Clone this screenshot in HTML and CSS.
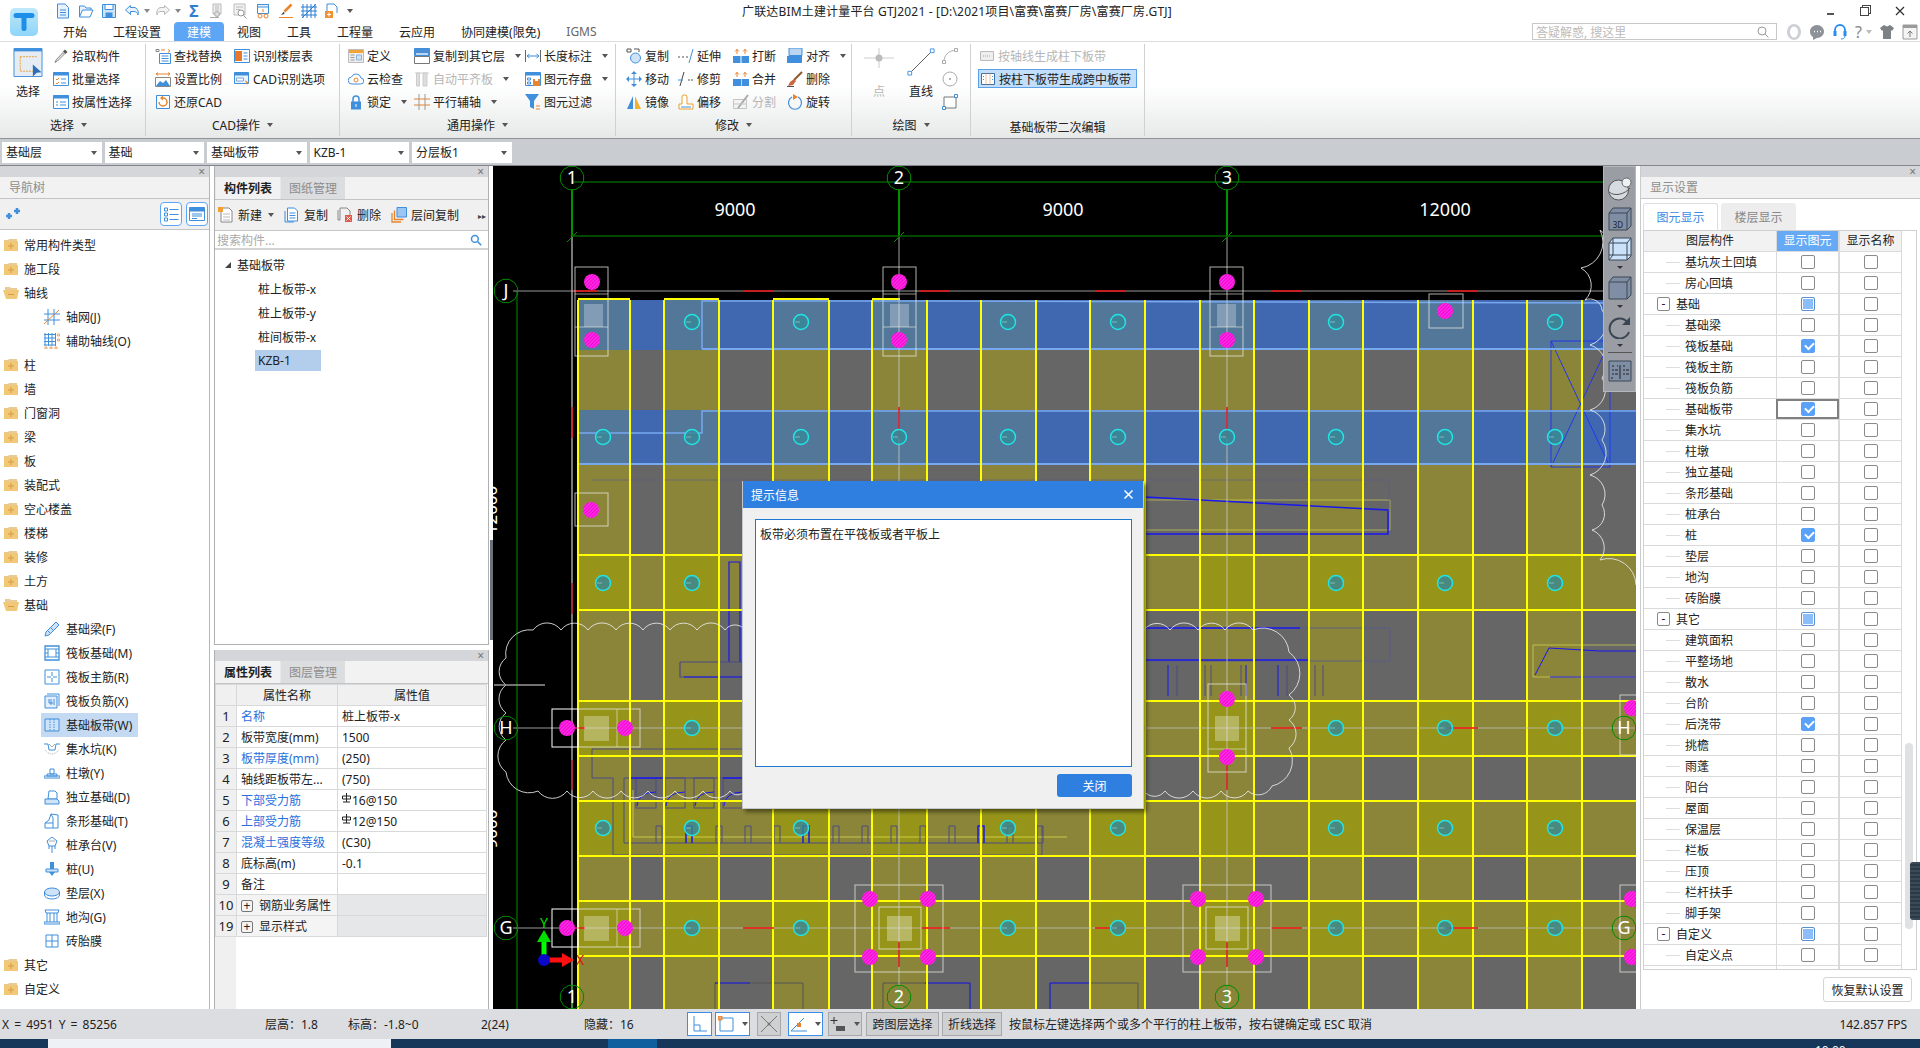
FILE: index.html
```html
<!DOCTYPE html>
<html lang="zh-CN">

<head>
    <meta charset="UTF-8">
    <title>广联达BIM土建计量平台 GTJ2021</title>
    <link rel="stylesheet" href="styles.css">
</head>

<body>
    <svg class="defs" width="0" height="0">
        <defs>
            <linearGradient id="logoFill" x1="0" y1="0" x2="0" y2="1">
                <stop offset="0" stop-color="#bfe8fb" />
                <stop offset="1" stop-color="#8fd4f8" />
            </linearGradient>
            <!-- 快速访问 -->
            <symbol id="q-doc" viewBox="0 0 16 16"><path d="M2.5 1h7.5l3.5 3.5V15h-11z" fill="#e8f2fc" stroke="#3f8fdc" /><path d="M5 7h6M5 9.500h6M5 12h6" stroke="#3f8fdc" /></symbol>
            <symbol id="q-open" viewBox="0 0 16 16"><path d="M1.500 14V3h5l1.500 2h5v2" fill="#e8f2fc" stroke="#3f8fdc" /><path d="M1.500 14l3-7h10.500l-3 7z" fill="#fff" stroke="#3f8fdc" /></symbol>
            <symbol id="q-save" viewBox="0 0 16 16"><path d="M1.500 1.500h13v13h-13z" fill="#cfe3f8" stroke="#3f8fdc" /><path d="M4 1.500h8v5h-8z" fill="#fff" stroke="#3f8fdc" /><path d="M4.500 14.500v-5h7v5" fill="#3f8fdc" /></symbol>
            <symbol id="q-undo" viewBox="0 0 16 16"><path d="M6.500 2.500l-5 4.500 5 4.500v-3h3.500c2 0 3.500 1 4 3.500 1-4-1-7.500-4-7.500h-3.500z" fill="#e8f2fc" stroke="#3f8fdc" /></symbol>
            <symbol id="q-redo" viewBox="0 0 16 16"><path d="M9.500 2.500l5 4.500-5 4.500v-3h-3.500c-2 0-3.500 1-4 3.500-1-4 1-7.500 4-7.500h3.500z" fill="#f3f3f3" stroke="#b8b8b8" /></symbol>
            <symbol id="q-chk" viewBox="0 0 16 16"><path d="M4 1h8v10h-8z" fill="#eee" stroke="#bbb" /><path d="M6 3h4M6 5h4M6 7h4" stroke="#bbb" /><path d="M1 14.500h9" stroke="#aaa" /><circle cx="8" cy="11" r="2.500" fill="#ddd" stroke="#aaa" /></symbol>
            <symbol id="q-rep" viewBox="0 0 16 16"><path d="M2 1h11v11h-11z" fill="#f2f2f2" stroke="#bbb" /><path d="M4 4h7M4 6.500h4" stroke="#bbb" /><circle cx="9" cy="10" r="3" fill="#fff" stroke="#999" /><path d="M11.500 12.500l3 3" stroke="#999" /></symbol>
            <symbol id="q-calc" viewBox="0 0 16 16"><path d="M2.500 1.500h11v9h-11z" fill="#fff" stroke="#3f8fdc" /><path d="M2.500 1.500h11v2.500h-11z" fill="#e8f2fc" stroke="#3f8fdc" /><circle cx="5" cy="13" r="2" fill="#fff" stroke="#e8842c" /><circle cx="11" cy="13" r="2" fill="#fff" stroke="#e8842c" /><path d="M8 6v3" stroke="#e8842c" /></symbol>
            <symbol id="q-brush" viewBox="0 0 16 16"><path d="M13.500 1.500l-7 7" stroke="#e8842c" stroke-width="2.500" /><path d="M6 8.500l-3 3.500 3.500-1z" fill="#444" /><path d="M1 14.500h14" stroke="#e8842c" /></symbol>
            <symbol id="q-net" viewBox="0 0 16 16"><path d="M2 1v14M6 1v14M10 1v14M14 1v14M0 4h16M0 8h16M0 12h16" stroke="#2f7fd0" /><path d="M1 15L15 1" stroke="#2f7fd0" /></symbol>
            <symbol id="q-add" viewBox="0 0 16 16"><path d="M3 1h7l3 3v6" fill="#fff" stroke="#3f8fdc" /><path d="M3 1v8" stroke="#3f8fdc" /><path d="M1 8h8v7h-8z" fill="#f09030" /><path d="M5 9.500v4M3 11.500h4" stroke="#fff" /></symbol>

            <!-- 功能区 -->
            <symbol id="r-select" viewBox="0 0 30 30"><path d="M.5 .5h29v29h-29z" fill="#e6ecf4" stroke="#3f8fdc" /><path d="M.5 .5h29v3h-29z" fill="#3f8fdc" /><path d="M7 9h17M7 9v15" stroke="#e8a030" stroke-dasharray="2 1" fill="none" /><path d="M20 17l9 8-5 .5-4 4z" fill="#2e6fb8" /><path d="M7 24h13" stroke="#e8a030" stroke-dasharray="2 1" /></symbol>
            <symbol id="r-dropper" viewBox="0 0 16 16"><path d="M12 1.500l2.500 2.500-2 2-2.500-2.500z" fill="#555" /><path d="M10 4.500l1.500 1.500-7 7-2.500 1.500 1-2.500z" fill="#dfe6ee" stroke="#8a8a8a" /></symbol>
            <symbol id="r-batch" viewBox="0 0 16 16"><path d="M.5 1.500h15v13h-15z" fill="#fff" stroke="#3f8fdc" /><path d="M.5 1.500h15v3h-15z" fill="#3f8fdc" /><path d="M3 8l1 1 2-2M3 12l1 1 2-2" stroke="#e8842c" fill="none" /><path d="M8 8h5M8 12h5" stroke="#3f8fdc" /></symbol>
            <symbol id="r-attr" viewBox="0 0 16 16"><path d="M.5 1.500h15v13h-15z" fill="#fff" stroke="#3f8fdc" /><path d="M.5 1.500h15v3h-15z" fill="#3f8fdc" /><path d="M3 8h2M3 11h2M7 8h6M7 11h6" stroke="#3f8fdc" /></symbol>
            <symbol id="r-find" viewBox="0 0 16 16"><path d="M4.500 5.500h11v10h-11z" fill="#fff" stroke="#3f8fdc" /><path d="M6.500 8h7M6.500 10.500h7M6.500 13h7" stroke="#3f8fdc" /><path d="M1 1.500h3v2h-3z" fill="none" stroke="#888" /><path d="M6 2h4" stroke="#e8842c" /><path d="M13 1.500l2 1.500-2 1.500" stroke="#e8842c" fill="none" /></symbol>
            <symbol id="r-scale" viewBox="0 0 16 16"><path d="M.5 6.500h15v9h-15z" fill="#fff" stroke="#888" /><path d="M1 15l4-5 3 2 3-3 4 6z" fill="#3f8fdc" /><path d="M1 3h14M1 3l2-1.500M1 3l2 1.500M15 3l-2-1.500M15 3l-2 1.500" stroke="#e8842c" fill="none" /></symbol>
            <symbol id="r-restore" viewBox="0 0 16 16"><path d="M1.500 1.500h13v13h-13z" fill="#fff" stroke="#3f8fdc" /><path d="M4 8a4 4 0 1 0 4-4" fill="none" stroke="#e8842c" stroke-width="1.500" /><path d="M8 1.500v5l-3-2.500z" fill="#e8842c" /></symbol>
            <symbol id="r-floor" viewBox="0 0 16 16"><path d="M.5 1.500h15v13h-15z" fill="#fff" stroke="#3f8fdc" /><path d="M1 3h7v10h-7z" fill="#e8762c" /><path d="M9.500 5h4M9.500 8h4M9.500 11h4" stroke="#3f8fdc" /></symbol>
            <symbol id="r-cadopt" viewBox="0 0 16 16"><path d="M.5 1.500h14v11h-14z" fill="#eaf2fb" stroke="#3f8fdc" /><path d="M.5 1.500h14v3h-14z" fill="#3f8fdc" /><path d="M11 9l4 3-2 .5.5 2.500z" fill="#e8842c" /><path d="M2.500 7h7v3h-7z" fill="#fff" stroke="#7aa7dd" /></symbol>
            <symbol id="r-define" viewBox="0 0 16 16"><path d="M.5 1.500h15v13h-15z" fill="#eee" stroke="#bbb" /><path d="M1 2h14v3h-14z" fill="#f2a33a" /><path d="M2.500 7h4M2.500 9.500h4M2.500 12h4" stroke="#999" /><path d="M8.500 7h5v5h-5z" fill="#cfe0f3" stroke="#8fb3dd" /></symbol>
            <symbol id="r-cloud" viewBox="0 0 16 16"><path d="M4 13a3.500 3.500 0 0 1-.5-7 5 5 0 0 1 9.500 1 3 3 0 0 1-.5 6z" fill="#fff" stroke="#3f8fdc" /><circle cx="8" cy="9" r="2" fill="none" stroke="#e8842c" /></symbol>
            <symbol id="r-lock" viewBox="0 0 16 16"><path d="M5 8V5a3 3 0 0 1 6 0v3" fill="none" stroke="#3f8fdc" stroke-width="1.500" /><path d="M3 7.500h10v8h-10z" fill="#3f8fdc" /><path d="M8 10v3" stroke="#fff" /></symbol>
            <symbol id="r-copylayer" viewBox="0 0 16 16"><path d="M.5 .5h15v7h-15z" fill="#4a8fd6" stroke="#3f8fdc" /><path d="M.5 8.500h15v7h-15z" fill="#fff" stroke="#777" /><path d="M2 5h12v2h-12z" fill="#bcd6f2" /></symbol>
            <symbol id="r-autoalign" viewBox="0 0 16 16"><path d="M1 2h14" stroke="#ccc" /><path d="M2.500 2h3v13h-3zM9 2h4v13h-4z" fill="#ddd" stroke="#ccc" /></symbol>
            <symbol id="r-parallel" viewBox="0 0 16 16"><path d="M0 5h16M0 11h16" stroke="#e8842c" /><path d="M5 0v16M11 0v16" stroke="#999" /></symbol>
            <symbol id="r-length" viewBox="0 0 16 16"><path d="M.5 2v12M15.500 2v12" stroke="#666" /><path d="M2 8h12M2 8l2.500-2M2 8l2.500 2M14 8l-2.500-2M14 8l-2.500 2" stroke="#3f8fdc" fill="none" /></symbol>
            <symbol id="r-saveel" viewBox="0 0 16 16"><path d="M.5 1.500h15v13h-15z" fill="#fff" stroke="#3f8fdc" /><path d="M.5 1.500h15v3h-15z" fill="#3f8fdc" /><path d="M8 8h7v7h-7z" fill="#e8842c" /><path d="M10 8h3v2h-3z" fill="#fff" /><path d="M2.500 7h3v2h-3zM2.500 11h3v2h-3z" fill="none" stroke="#3f8fdc" /></symbol>
            <symbol id="r-filter" viewBox="0 0 16 16"><path d="M0 0h14l-5 7v8l-4-2v-6z" fill="#3f8fdc" /><path d="M11 12h4M11 15h4" stroke="#e8842c" /></symbol>
            <symbol id="r-copy" viewBox="0 0 16 16"><circle cx="9.500" cy="10" r="5" fill="#cfe3f8" stroke="#3f8fdc" /><path d="M1 1h4v3h-4zM8 1h5M13 1v3" fill="none" stroke="#555" /></symbol>
            <symbol id="r-move" viewBox="0 0 16 16"><path d="M8 2v12M2 8h12" stroke="#3f8fdc" /><path d="M8 0l3 3h-6zM8 16l3-3h-6zM0 8l3-3v6zM16 8l-3-3v6z" fill="#3f8fdc" /></symbol>
            <symbol id="r-mirror" viewBox="0 0 16 16"><path d="M7 2v13h-6z" fill="#3f8fdc" /><path d="M9 2v13h6z" fill="#f2b030" /></symbol>
            <symbol id="r-extend" viewBox="0 0 16 16"><path d="M0 9h2M4 9h2M8 9h2" stroke="#555" /><path d="M11 15L15 1" stroke="#3f8fdc" /></symbol>
            <symbol id="r-trim" viewBox="0 0 16 16"><path d="M10 9h2M13 9h2" stroke="#555" /><path d="M2 15L6 1" stroke="#444" /><path d="M0 9h5" stroke="#3f8fdc" /></symbol>
            <symbol id="r-offset" viewBox="0 0 16 16"><path d="M1 15v-5h3V3a2 2 0 0 1 2-2h1a2 2 0 0 1 2 2v7h6v5z" fill="#fff" stroke="#e8a030" /><path d="M3 13h10" stroke="#3f8fdc" /></symbol>
            <symbol id="r-break" viewBox="0 0 16 16"><path d="M0 8h7.500v7h-7.500zM8.500 8h7.500v7h-7.500z" fill="#3f8fdc" /><path d="M4 1v5M2 3.500l2-2 2 2M12 1v5M10 3.500l2-2 2 2" fill="none" stroke="#e8842c" /></symbol>
            <symbol id="r-merge" viewBox="0 0 16 16"><path d="M0 8h16v7h-16z" fill="#3f8fdc" /><path d="M8 8h1v7h-1z" fill="#bcd6f2" /><path d="M4 1v5M2 3.500l2-2 2 2M12 1v5M10 3.500l2-2 2 2" fill="none" stroke="#e8842c" /></symbol>
            <symbol id="r-split" viewBox="0 0 16 16"><path d="M.5 5.500h13v9h-13z" fill="#f4f4f4" stroke="#c4c4c4" /><path d="M5 14L15 1" stroke="#aaa" stroke-width="2" /><path d="M0 10h14" stroke="#c4c4c4" /></symbol>
            <symbol id="r-align" viewBox="0 0 16 16"><path d="M2 0h13v7.500h-13z" fill="#bcd6f2" stroke="#3f8fdc" /><path d="M0 8h15v7h-15z" fill="#3f8fdc" /></symbol>
            <symbol id="r-delete" viewBox="0 0 16 16"><path d="M15 1L7 9" stroke="#8a5a2a" stroke-width="2" /><path d="M7 8l2 2-3 4-5 1 2-4z" fill="#c8683c" /><path d="M0 15.500h7" stroke="#555" /></symbol>
            <symbol id="r-rotate" viewBox="0 0 16 16"><path d="M5 3a6.500 6.500 0 1 0 6 0" fill="none" stroke="#3f8fdc" stroke-width="1.200" /><path d="M6 0l5 3-5 3z" fill="#e8842c" /></symbol>
            <symbol id="r-point" viewBox="0 0 30 28"><path d="M15 0v20M0 10h30" stroke="#ccc" /><circle cx="15" cy="10" r="3.500" fill="#bbb" /></symbol>
            <symbol id="r-line" viewBox="0 0 30 30"><path d="M3 27L27 3" stroke="#555" /><path d="M1 25h4v4h-4zM25 1h4v4h-4z" fill="#fff" stroke="#3f8fdc" /></symbol>
            <symbol id="r-arc" viewBox="0 0 16 16"><path d="M2 14C2 7 6 3 14 2" fill="none" stroke="#aaa" /><path d="M.5 12.500h3v3h-3zM12.500 .5h3v3h-3z" fill="#fff" stroke="#aaa" /></symbol>
            <symbol id="r-circle" viewBox="0 0 16 16"><circle cx="8" cy="8" r="7" fill="#fff" stroke="#aaa" /><circle cx="8" cy="8" r="1" fill="#999" /></symbol>
            <symbol id="r-rect" viewBox="0 0 16 16"><path d="M2 3h12v11h-12z" fill="#fff" stroke="#777" /><path d="M.5 12.500h3v3h-3zM12.500 .5h3v3h-3z" fill="#fff" stroke="#3f8fdc" /></symbol>
            <symbol id="r-strip1" viewBox="0 0 16 16"><path d="M1.500 3.500h13v9h-13z" fill="#eee" stroke="#bbb" /><path d="M4 8h8" stroke="#aaa" stroke-dasharray="1 1" /></symbol>
            <symbol id="r-strip2" viewBox="0 0 16 16"><path d="M1.500 2.500h13v11h-13z" fill="#fff" stroke="#3f6fa8" /><path d="M6 2.500v11M10 2.500v11" stroke="#e8842c" stroke-dasharray="1 1" /><path d="M3.500 5v1M3.500 8v1M12.500 5v1M12.500 8v1" stroke="#3f8fdc" /></symbol>

            <!-- 导航树 -->
            <symbol id="n-pin" viewBox="0 0 16 16"><path d="M1 10h6M4 7v6M9 5h6M12 2v6" stroke="#3f8fdc" stroke-width="2.500" /></symbol>
            <symbol id="n-list" viewBox="0 0 16 16"><path d="M1.500 2h3v3h-3zM1.500 7h3v3h-3zM1.500 12h3v3h-3z" fill="none" stroke="#3f8fdc" /><path d="M6.500 3.500h9M6.500 8.500h9M6.500 13.500h9" stroke="#3f8fdc" /></symbol>
            <symbol id="n-form" viewBox="0 0 16 16"><path d="M.5 1.500h15v13h-15z" fill="#fff" stroke="#3f8fdc" /><path d="M.5 1.500h15v4h-15z" fill="#3f8fdc" /><path d="M3 8h10M3 10h10M3 12.500h5" stroke="#3f8fdc" /></symbol>
            <symbol id="n-fold" viewBox="0 0 16 16"><path d="M1 3h4l1-1h8v3h-13z" fill="#e8cb96" /><path d="M1 4h14v10h-14z" fill="#f0c878" /><path d="M8 6v6M5 9h6" stroke="#d99a3a" /></symbol>
            <symbol id="n-foldo" viewBox="0 0 16 16"><path d="M2 2h5l1 1h6v3h-12z" fill="#e8cb96" /><path d="M0 5h16l-2 9h-11z" fill="#f0c878" /><path d="M5 9.500h6" stroke="#d99a3a" /></symbol>
            <symbol id="n-axis" viewBox="0 0 16 16"><path d="M4 0v16M10 0v16M0 5h16M0 11h16" stroke="#3f8fdc" /><path d="M0 15L15 1" stroke="#e8842c" /></symbol>
            <symbol id="n-aux" viewBox="0 0 16 16"><path d="M1 0v13M4.500 0v13M8 0v13M11.500 0v13M0 1.500h12M0 5h12M0 8.500h12M0 12h12" stroke="#3f8fdc" /><path d="M13.500 1h2v2h-2zM13.500 6h2v2h-2zM1 14h2v2h-2zM6 14h2v2h-2zM11 14h2v2h-2z" fill="none" stroke="#e8842c" stroke-width=".7" /></symbol>
            <symbol id="n-pen" viewBox="0 0 16 16"><path d="M12 1l3 3-10 10-4 1 1-4z" fill="#cfe3f8" stroke="#3f8fdc" /><path d="M4 10l3 3M7 7l3 3" stroke="#3f8fdc" /></symbol>
            <symbol id="n-raft" viewBox="0 0 16 16"><path d="M1 1h14v14h-14z" fill="none" stroke="#3f8fdc" stroke-width="1.300" /><path d="M4 4h8v8h-8z" fill="none" stroke="#3f8fdc" /><path d="M1 4h3M1 8h3M1 12h3M12 4h3M12 8h3M12 12h3" stroke="#3f8fdc" /></symbol>
            <symbol id="n-rmain" viewBox="0 0 16 16"><path d="M1 1h14v14h-14z" fill="#fff" stroke="#3f8fdc" /><path d="M8 3v4M8 9v4M3 8h4M9 8h4" stroke="#3f8fdc" /></symbol>
            <symbol id="n-rneg" viewBox="0 0 16 16"><path d="M1 3h12v12h-12z" fill="#e3eefa" stroke="#3f8fdc" /><path d="M3 1h12v12" fill="none" stroke="#3f8fdc" /><path d="M5 6v4h4M7 6v6M10 6v6" fill="none" stroke="#3f8fdc" /></symbol>
            <symbol id="n-strip" viewBox="0 0 16 16"><path d="M1 2h14v12h-14z" fill="#cfe3f8" stroke="#3f8fdc" /><path d="M6 2v12M10 2v12" stroke="#3f8fdc" stroke-dasharray="1.500 1" /></symbol>
            <symbol id="n-pit" viewBox="0 0 16 16"><path d="M0 3h4l1 6h6l1-6h4" fill="none" stroke="#3f8fdc" /><path d="M1 9q7 8 14 0" fill="none" stroke="#aaa" stroke-dasharray="1 1" /><path d="M5 3l3 3 3-3" fill="none" stroke="#aaa" /></symbol>
            <symbol id="n-pier" viewBox="0 0 16 16"><path d="M6 4h4v5h-4zM3 9h10v2h-10zM0 11h16v2h-16z" fill="#fff" stroke="#3f8fdc" /></symbol>
            <symbol id="n-iso" viewBox="0 0 16 16"><path d="M5 2h6l2 2v6h-9z" fill="#fff" stroke="#3f8fdc" /><path d="M1 10h12l2 2v3h-14z" fill="#cfe3f8" stroke="#3f8fdc" /></symbol>
            <symbol id="n-stripf" viewBox="0 0 16 16"><path d="M1 15v-5l4-3 2-6 7 1v13z" fill="#fff" stroke="#3f8fdc" /><path d="M7 1l2 4v10M1 10h8" fill="none" stroke="#3f8fdc" /></symbol>
            <symbol id="n-cap" viewBox="0 0 16 16"><path d="M8 0l5 4-2 5h-6l-2-5z" fill="#fff" stroke="#3f8fdc" /><path d="M5 9v3M8 9v7M11 9v3" stroke="#3f8fdc" /><path d="M5 4h6" stroke="#aaa" /></symbol>
            <symbol id="n-pile" viewBox="0 0 16 16"><path d="M6 1h4v8h-4z" fill="#3f8fdc" /><path d="M2 8h12v3h-12z" fill="#cfe3f8" stroke="#3f8fdc" /><path d="M5 11h6l-3 4z" fill="#3f8fdc" /></symbol>
            <symbol id="n-pad" viewBox="0 0 16 16"><path d="M.5 7a7.500 4 0 1 0 15 0a7.500 4 0 1 0-15 0z" fill="#cfe3f8" stroke="#3f8fdc" /><path d="M.5 7v3a7.500 4 0 0 0 15 0V7" fill="none" stroke="#3f8fdc" /></symbol>
            <symbol id="n-ditch" viewBox="0 0 16 16"><path d="M1 1h14l-1 3h-12z" fill="#fff" stroke="#3f8fdc" /><path d="M3 4v9M6 4v9M10 4v9M13 4v9M0 13h16v2h-16z" fill="none" stroke="#3f8fdc" /></symbol>
            <symbol id="n-brick" viewBox="0 0 16 16"><path d="M2 2h12v12h-12zM8 2v12M2 8h12" fill="#fff" stroke="#3f8fdc" /></symbol>

            <!-- 构件列表 -->
            <symbol id="m-new" viewBox="0 0 16 16"><path d="M3 1h8l3 3v11h-11z" fill="#fff" stroke="#888" /><path d="M5 7h7M5 10h7M5 13h7" stroke="#bbb" /><path d="M0 0h5v5h-5z" fill="#f0a030" /></symbol>
            <symbol id="m-dup" viewBox="0 0 16 16"><path d="M1 4v11h9" fill="none" stroke="#3f8fdc" /><path d="M3.500 1h7l3 3v10h-10z" fill="#fff" stroke="#3f8fdc" /><path d="M5.500 6h6M5.500 8.500h6M5.500 11h6" stroke="#3f8fdc" /></symbol>
            <symbol id="m-del" viewBox="0 0 16 16"><path d="M1 3v10h2M3 1h7l3 3v5" fill="none" stroke="#888" /><path d="M3 1v12" stroke="#888" /><path d="M8 8h7v7h-7z" fill="#e0584a" /><path d="M9.500 9.500l4 4M13.500 9.500l-4 4" stroke="#fff" /></symbol>
            <symbol id="m-lcopy" viewBox="0 0 16 16"><path d="M1 6v9h9" fill="none" stroke="#e8842c" stroke-width="1.300" /><path d="M3.500 3.500v9h9" fill="none" stroke="#e8842c" stroke-width="1.300" /><path d="M6 .5h9.500v9.500h-9.500z" fill="#9cc6f2" stroke="#3f8fdc" /></symbol>
            <symbol id="m-search" viewBox="0 0 16 16"><circle cx="6.500" cy="6.500" r="4.500" fill="#fff" stroke="#3f8fdc" stroke-width="2" /><path d="M10 10l5 5" stroke="#3f8fdc" stroke-width="2" /></symbol>

            <!-- 状态栏 -->
            <symbol id="s-ortho" viewBox="0 0 16 16"><path d="M2 0v15h13" fill="none" stroke="#3f8fdc" /><path d="M2 9h6v6" fill="none" stroke="#3f8fdc" /></symbol>
            <symbol id="s-snap" viewBox="0 0 16 16"><path d="M2 2h13v13h-13z" fill="#fff" stroke="#3f8fdc" /><path d="M0 0h4v4h-4z" fill="#f0a060" stroke="#e8842c" /></symbol>
            <symbol id="s-cross" viewBox="0 0 16 16"><path d="M0 0l16 16M16 0L0 16" stroke="#777" /><circle cx="8" cy="8" r="1.500" fill="#777" /></symbol>
            <symbol id="s-angle" viewBox="0 0 16 16"><path d="M0 15L13 2" stroke="#3f8fdc" /><path d="M0 15h16" stroke="#3f8fdc" /><path d="M6 7h4v4h-4z" fill="#e8842c" /></symbol>
            <symbol id="s-plus" viewBox="0 0 16 16"><path d="M4 1v7M.5 4.500h7" stroke="#333" /><path d="M6 10h9v5h-9z" fill="#555" /></symbol>

            <!-- 视图工具条 -->
            <symbol id="v-sphere" viewBox="0 0 24 24"><circle cx="10.500" cy="13" r="10" fill="#d6dbe1" stroke="#555" /><path d="M1 15c6 5 16 2 21-4" fill="none" stroke="#555" /><circle cx="18.500" cy="5.500" r="4.500" fill="#eef1f4" stroke="#666" /></symbol>
            <symbol id="v-cube" viewBox="0 0 24 24"><path d="M1 6l4-5h18v18l-4 4H1z" fill="#7f8ea4" stroke="#3b4655" /><path d="M1 6h18v17M19 6l4-5" fill="none" stroke="#3b4655" /></symbol>
            <symbol id="v-cube3d" viewBox="0 0 24 24"><path d="M1 6l4-5h18v18l-4 4H1z" fill="#7f8ea4" stroke="#3b4655" /><path d="M1 6h18v17M19 6l4-5" fill="none" stroke="#3b4655" /><text x="10" y="21" font-size="8" text-anchor="middle" fill="#222" font-family="Noto Sans, sans-serif">3D</text></symbol>
            <symbol id="v-cubeb" viewBox="0 0 24 24"><path d="M1 6l4-5h18v18l-4 4H1z" fill="#cbe2fb" stroke="#3b4655" /><path d="M1 6h18v17M19 6l4-5M5 1v17H1M5 18h18" fill="none" stroke="#3b4655" /><path d="M1 23l4-5" stroke="#3b4655" /></symbol>
            <symbol id="v-rot" viewBox="0 0 24 24"><path d="M20 8a10 10 0 1 0 1 9" fill="none" stroke="#3b4655" stroke-width="2" /><path d="M22 2v8h-8z" fill="#3b4655" /></symbol>
            <symbol id="v-list" viewBox="0 0 24 24"><path d="M1 3h22v20H1z" fill="#7f8ea4" stroke="#3b4655" /><path d="M12 7v14M4 8h2M9 8h1M4 12h2M7 12h3M4 16h2M7 16h3M15 8h2M15 12h2M18 12h3M15 16h2M18 16h3M3 20h2" stroke="#222" /></symbol>

            <!-- 右上角 -->
            <symbol id="t-user" viewBox="0 0 16 16"><path d="M8 0a7 8 0 0 0-7 8c0 4 3 8 7 8s7-4 7-8a7 8 0 0 0-7-8z" fill="#cdd0d4" /><ellipse cx="8" cy="8" rx="4" ry="5.500" fill="#fff" /></symbol>
            <symbol id="t-chat" viewBox="0 0 16 16"><path d="M8 1c4 0 7 3 7 6.500s-3 6.500-7 6.500L4 16v-3C2 12 1 10 1 7.500 1 4 4 1 8 1z" fill="#8d9298" /><path d="M5 7.500h1M8 7.500h1M11 7.500h1" stroke="#fff" stroke-width="1.500" /></symbol>
            <symbol id="t-head" viewBox="0 0 16 16"><path d="M3 9V6a5 5 0 0 1 10 0v3" fill="none" stroke="#2a8cf0" stroke-width="1.800" /><path d="M1.500 7h3v5h-3zM11.500 7h3v5h-3z" fill="#2a8cf0" /><path d="M13 12c0 2-2 3-4 3" fill="none" stroke="#2a8cf0" /></symbol>
            <symbol id="t-shirt" viewBox="0 0 16 16"><path d="M5 1l3 1.500L11 1l4 3-2 3-1-1v9H4V6L3 7 1 4z" fill="#7c8186" /></symbol>
            <symbol id="t-box" viewBox="0 0 16 16"><path d="M1 1h14v14h-14z" fill="#f4f4f4" stroke="#9a9a9a" /><path d="M1 1h14v3h-14z" fill="#9a9a9a" /><path d="M8 13V7M5.500 9.500L8 7l2.500 2.500" fill="none" stroke="#777" /></symbol>
        </defs>
    </svg>

    <header class="topbar">
        <div class="logo">
            <svg width="28" height="28" viewBox="0 0 28 28"><rect width="28" height="28" rx="5" fill="url(#logoFill)" /><path d="M6 7.500h16M14 7.500v13" stroke="#1e8fe8" stroke-width="5" stroke-linecap="round" fill="none" /></svg>
        </div>
        <div class="topbar-rows">
            <div class="titlerow">
                <div class="qat">
                    <svg class="ic"><use href="#q-doc" /></svg>
                    <svg class="ic"><use href="#q-open" /></svg>
                    <svg class="ic"><use href="#q-save" /></svg>
                    <svg class="ic"><use href="#q-undo" /></svg><span class="caret qat-caret"></span>
                    <svg class="ic"><use href="#q-redo" /></svg><span class="caret qat-caret"></span>
                    <span class="sigma">Σ</span>
                    <svg class="ic"><use href="#q-chk" /></svg>
                    <svg class="ic"><use href="#q-rep" /></svg>
                    <svg class="ic"><use href="#q-calc" /></svg>
                    <svg class="ic"><use href="#q-brush" /></svg>
                    <svg class="ic"><use href="#q-net" /></svg>
                    <svg class="ic"><use href="#q-add" /></svg>
                    <span class="caret qat-more"></span>
                </div>
                <div class="apptitle">广联达BIM土建计量平台 GTJ2021 - [D:\2021项目\富赛\富赛厂房\富赛厂房.GTJ]</div>
                <div class="winbtns">
                    <span class="win-min"></span>
                    <span class="win-max"></span>
                    <svg class="win-close" viewBox="0 0 10 10"><path d="M1 1l8 8M9 1l-8 8" stroke="#333" stroke-width="1.300" /></svg>
                </div>
            </div>
            <div class="tabrow">
                <nav class="tabs">
                    <span class="tab">开始</span>
                    <span class="tab">工程设置</span>
                    <span class="tab tab-on">建模</span>
                    <span class="tab">视图</span>
                    <span class="tab">工具</span>
                    <span class="tab">工程量</span>
                    <span class="tab">云应用</span>
                    <span class="tab">协同建模(限免)</span>
                    <span class="tab tab-gray">IGMS</span>
                </nav>
                <div class="helpbar">
                    <div class="helpsearch"><span>答疑解惑, 搜这里</span>
                        <svg width="12" height="12" viewBox="0 0 12 12"><circle cx="5" cy="5" r="4" fill="none" stroke="#999" /><path d="M8 8l3.500 3.500" stroke="#999" /></svg>
                    </div>
                    <svg class="ic"><use href="#t-user" /></svg>
                    <svg class="ic"><use href="#t-chat" /></svg>
                    <svg class="ic"><use href="#t-head" /></svg>
                    <span class="help-q">?</span><span class="caret help-caret"></span>
                    <svg class="ic"><use href="#t-shirt" /></svg>
                    <svg class="ic"><use href="#t-box" /></svg>
                </div>
            </div>
        </div>
    </header>

    <section class="ribbon">
        <div class="group g-select">
            <div class="group-body">
                <div class="bigbtn big-select"><svg width="30" height="29"><use href="#r-select" /></svg><span>选择</span></div>
                <div class="col">
                    <div class="rb"><svg class="ic"><use href="#r-dropper" /></svg>拾取构件</div>
                    <div class="rb"><svg class="ic"><use href="#r-batch" /></svg>批量选择</div>
                    <div class="rb"><svg class="ic"><use href="#r-attr" /></svg>按属性选择</div>
                </div>
            </div>
            <div class="group-label">选择<span class="caret"></span></div>
        </div>
        <div class="group g-cad">
            <div class="group-body">
                <div class="col c79">
                    <div class="rb"><svg class="ic"><use href="#r-find" /></svg>查找替换</div>
                    <div class="rb"><svg class="ic"><use href="#r-scale" /></svg>设置比例</div>
                    <div class="rb"><svg class="ic"><use href="#r-restore" /></svg>还原CAD</div>
                </div>
                <div class="col">
                    <div class="rb"><svg class="ic"><use href="#r-floor" /></svg>识别楼层表</div>
                    <div class="rb"><svg class="ic"><use href="#r-cadopt" /></svg>CAD识别选项</div>
                </div>
            </div>
            <div class="group-label">CAD操作<span class="caret"></span></div>
        </div>
        <div class="group g-common">
            <div class="group-body">
                <div class="col c66">
                    <div class="rb"><svg class="ic"><use href="#r-define" /></svg>定义</div>
                    <div class="rb"><svg class="ic"><use href="#r-cloud" /></svg>云检查</div>
                    <div class="rb"><svg class="ic"><use href="#r-lock" /></svg>锁定<span class="caret"></span></div>
                </div>
                <div class="col c111">
                    <div class="rb"><svg class="ic"><use href="#r-copylayer" /></svg>复制到其它层<span class="caret"></span></div>
                    <div class="rb off"><svg class="ic"><use href="#r-autoalign" /></svg>自动平齐板<span class="caret"></span></div>
                    <div class="rb"><svg class="ic"><use href="#r-parallel" /></svg>平行辅轴<span class="caret"></span></div>
                </div>
                <div class="col">
                    <div class="rb"><svg class="ic"><use href="#r-length" /></svg>长度标注<span class="caret"></span></div>
                    <div class="rb"><svg class="ic"><use href="#r-saveel" /></svg>图元存盘<span class="caret"></span></div>
                    <div class="rb"><svg class="ic"><use href="#r-filter" /></svg>图元过滤</div>
                </div>
            </div>
            <div class="group-label">通用操作<span class="caret"></span></div>
        </div>
        <div class="group g-modify">
            <div class="group-body">
                <div class="col c52">
                    <div class="rb"><svg class="ic"><use href="#r-copy" /></svg>复制</div>
                    <div class="rb"><svg class="ic"><use href="#r-move" /></svg>移动</div>
                    <div class="rb"><svg class="ic"><use href="#r-mirror" /></svg>镜像</div>
                </div>
                <div class="col c55">
                    <div class="rb"><svg class="ic"><use href="#r-extend" /></svg>延伸</div>
                    <div class="rb"><svg class="ic"><use href="#r-trim" /></svg>修剪</div>
                    <div class="rb"><svg class="ic"><use href="#r-offset" /></svg>偏移</div>
                </div>
                <div class="col c54">
                    <div class="rb"><svg class="ic"><use href="#r-break" /></svg>打断</div>
                    <div class="rb"><svg class="ic"><use href="#r-merge" /></svg>合并</div>
                    <div class="rb off"><svg class="ic"><use href="#r-split" /></svg>分割</div>
                </div>
                <div class="col">
                    <div class="rb"><svg class="ic"><use href="#r-align" /></svg>对齐<span class="caret"></span></div>
                    <div class="rb"><svg class="ic"><use href="#r-delete" /></svg>删除</div>
                    <div class="rb"><svg class="ic"><use href="#r-rotate" /></svg>旋转</div>
                </div>
            </div>
            <div class="group-label">修改<span class="caret"></span></div>
        </div>
        <div class="group g-draw">
            <div class="group-body">
                <div class="bigbtn big-draw off"><svg width="30" height="28"><use href="#r-point" /></svg><span>点</span></div>
                <div class="bigbtn big-draw"><svg width="30" height="28"><use href="#r-line" /></svg><span>直线</span></div>
                <div class="col">
                    <div class="rb"><svg class="ic"><use href="#r-arc" /></svg></div>
                    <div class="rb"><svg class="ic"><use href="#r-circle" /></svg></div>
                    <div class="rb"><svg class="ic"><use href="#r-rect" /></svg></div>
                </div>
            </div>
            <div class="group-label">绘图<span class="caret"></span></div>
        </div>
        <div class="group g-strip">
            <div class="group-body">
                <div class="col">
                    <div class="rb off"><svg class="ic"><use href="#r-strip1" /></svg>按轴线生成柱下板带</div>
                    <div class="rb rb-on"><svg class="ic"><use href="#r-strip2" /></svg>按柱下板带生成跨中板带</div>
                </div>
            </div>
            <div class="group-label">基础板带二次编辑</div>
        </div>
    </section>

    <div class="selectbar">
        <div class="combo">基础层</div>
        <div class="combo">基础</div>
        <div class="combo">基础板带</div>
        <div class="combo">KZB-1</div>
        <div class="combo">分层板1</div>
    </div>

    <main class="workspace">
        <aside class="panel navpanel">
            <div class="strip"><span class="strip-x">×</span></div>
            <div class="panel-title">导航树</div>
            <div class="navtools">
                <svg class="ic"><use href="#n-pin" /></svg>
                <span class="navbtn nb-first"><svg class="ic"><use href="#n-list" /></svg></span>
                <span class="navbtn"><svg class="ic"><use href="#n-form" /></svg></span>
            </div>
            <ul class="tree">
                <li><svg class="ic"><use href="#n-fold" /></svg>常用构件类型</li>
                <li><svg class="ic"><use href="#n-fold" /></svg>施工段</li>
                <li><svg class="ic"><use href="#n-foldo" /></svg>轴线</li>
                <li class="sub"><svg class="ic"><use href="#n-axis" /></svg>轴网(J)</li>
                <li class="sub"><svg class="ic"><use href="#n-aux" /></svg>辅助轴线(O)</li>
                <li><svg class="ic"><use href="#n-fold" /></svg>柱</li>
                <li><svg class="ic"><use href="#n-fold" /></svg>墙</li>
                <li><svg class="ic"><use href="#n-fold" /></svg>门窗洞</li>
                <li><svg class="ic"><use href="#n-fold" /></svg>梁</li>
                <li><svg class="ic"><use href="#n-fold" /></svg>板</li>
                <li><svg class="ic"><use href="#n-fold" /></svg>装配式</li>
                <li><svg class="ic"><use href="#n-fold" /></svg>空心楼盖</li>
                <li><svg class="ic"><use href="#n-fold" /></svg>楼梯</li>
                <li><svg class="ic"><use href="#n-fold" /></svg>装修</li>
                <li><svg class="ic"><use href="#n-fold" /></svg>土方</li>
                <li><svg class="ic"><use href="#n-foldo" /></svg>基础</li>
                <li class="sub"><svg class="ic"><use href="#n-pen" /></svg>基础梁(F)</li>
                <li class="sub"><svg class="ic"><use href="#n-raft" /></svg>筏板基础(M)</li>
                <li class="sub"><svg class="ic"><use href="#n-rmain" /></svg>筏板主筋(R)</li>
                <li class="sub"><svg class="ic"><use href="#n-rneg" /></svg>筏板负筋(X)</li>
                <li class="sub sub-on"><svg class="ic"><use href="#n-strip" /></svg>基础板带(W)</li>
                <li class="sub"><svg class="ic"><use href="#n-pit" /></svg>集水坑(K)</li>
                <li class="sub"><svg class="ic"><use href="#n-pier" /></svg>柱墩(Y)</li>
                <li class="sub"><svg class="ic"><use href="#n-iso" /></svg>独立基础(D)</li>
                <li class="sub"><svg class="ic"><use href="#n-stripf" /></svg>条形基础(T)</li>
                <li class="sub"><svg class="ic"><use href="#n-cap" /></svg>桩承台(V)</li>
                <li class="sub"><svg class="ic"><use href="#n-pile" /></svg>桩(U)</li>
                <li class="sub"><svg class="ic"><use href="#n-pad" /></svg>垫层(X)</li>
                <li class="sub"><svg class="ic"><use href="#n-ditch" /></svg>地沟(G)</li>
                <li class="sub"><svg class="ic"><use href="#n-brick" /></svg>砖胎膜</li>
                <li><svg class="ic"><use href="#n-fold" /></svg>其它</li>
                <li><svg class="ic"><use href="#n-fold" /></svg>自定义</li>
            </ul>
        </aside>

        <div class="midcol">
            <section class="panel listpanel">
                <div class="strip"><span class="strip-x">×</span></div>
                <div class="ptabs"><span class="ptab ptab-on">构件列表</span><span class="ptab">图纸管理</span></div>
                <div class="listtools">
                    <span class="lt lt-new"><svg class="ic"><use href="#m-new" /></svg>新建<span class="caret"></span></span>
                    <span class="lt lt-dup"><svg class="ic"><use href="#m-dup" /></svg>复制</span>
                    <span class="lt lt-del"><svg class="ic"><use href="#m-del" /></svg>删除</span>
                    <span class="lt lt-copy"><svg class="ic"><use href="#m-lcopy" /></svg>层间复制</span>
                    <span class="lt-more">▸▸</span>
                </div>
                <div class="listsearch"><span>搜索构件...</span><svg width="12" height="12"><use href="#m-search" /></svg></div>
                <div class="elemtree">
                    <div class="et-root"><span class="et-arrow"></span>基础板带</div>
                    <div class="et-item">桩上板带-x</div>
                    <div class="et-item">桩上板带-y</div>
                    <div class="et-item">桩间板带-x</div>
                    <div class="et-item et-on">KZB-1</div>
                </div>
            </section>
            <section class="panel proppanel">
                <div class="strip"><span class="strip-x">×</span></div>
                <div class="ptabs"><span class="ptab ptab-on">属性列表</span><span class="ptab">图层管理</span></div>
                <table class="props">
                    <tr class="phead"><th class="pn"></th><th>属性名称</th><th>属性值</th></tr>
                    <tr><td class="pn">1</td><td class="blue">名称</td><td>桩上板带-x</td></tr>
                    <tr><td class="pn">2</td><td>板带宽度(mm)</td><td>1500</td></tr>
                    <tr><td class="pn">3</td><td class="blue">板带厚度(mm)</td><td>(250)</td></tr>
                    <tr><td class="pn">4</td><td>轴线距板带左...</td><td>(750)</td></tr>
                    <tr><td class="pn">5</td><td class="blue">下部受力筋</td><td><svg class="rebar" viewBox="0 0 9 10"><path d="M4.500 0v9M.5 3h8v3h-8zM1 9h7" fill="none" stroke="#222" /></svg>16@150</td></tr>
                    <tr><td class="pn">6</td><td class="blue">上部受力筋</td><td><svg class="rebar" viewBox="0 0 9 10"><path d="M4.500 0v9M.5 3h8v3h-8zM1 9h7" fill="none" stroke="#222" /></svg>12@150</td></tr>
                    <tr><td class="pn">7</td><td class="blue">混凝土强度等级</td><td>(C30)</td></tr>
                    <tr><td class="pn">8</td><td>底标高(m)</td><td>-0.1</td></tr>
                    <tr><td class="pn">9</td><td>备注</td><td></td></tr>
                    <tr class="pgroup"><td class="pn">10</td><td class="pg-name"><span class="plus">+</span>钢筋业务属性</td><td></td></tr>
                    <tr class="pgroup"><td class="pn">19</td><td class="pg-name"><span class="plus">+</span>显示样式</td><td></td></tr>
                </table>
                <div class="prop-fill"></div>
            </section>
        </div>

        <div class="splitter"><span class="grip"></span></div>

        <section class="cad">
            <svg id="drawing" class="drawing" viewBox="493 166 1143 844" width="1143" height="844"></svg>
            <div class="viewtools">
                <svg class="vt"><use href="#v-sphere" /></svg>
                <svg class="vt"><use href="#v-cube3d" /></svg>
                <svg class="vt"><use href="#v-cubeb" /></svg>
                <span class="vt-caret"></span>
                <svg class="vt"><use href="#v-cube" /></svg>
                <span class="vt-caret"></span>
                <svg class="vt"><use href="#v-rot" /></svg>
                <span class="vt-caret"></span>
                <span class="vt-line"></span>
                <svg class="vt"><use href="#v-list" /></svg>
            </div>
            <div class="dialog">
                <div class="dialog-head"><span>提示信息</span><svg width="9" height="9" viewBox="0 0 9 9"><path d="M.5 .5l8 8M8.500 .5l-8 8" stroke="#fff" stroke-width="1.500" /></svg></div>
                <div class="dialog-body">
                    <div class="dialog-msg">板带必须布置在平筏板或者平板上</div>
                    <div class="dialog-foot"><button class="dialog-btn">关闭</button></div>
                </div>
            </div>
        </section>

        <aside class="panel showpanel">
            <div class="strip"><span class="strip-x">×</span></div>
            <div class="panel-title">显示设置</div>
            <div class="showtabs"><span class="stab stab-on">图元显示</span><span class="stab">楼层显示</span></div>
            <div class="showtable">
                <div class="show-rows">
                    <div class="srow shead"><div class="sname">图层构件</div><div class="scell sh-on">显示图元</div><div class="scell">显示名称</div></div>
                    <div id="showRows"></div>
                </div>
                <div class="show-track"><span class="show-thumb"></span></div>
            </div>
            <div class="showfoot"><button class="resetbtn">恢复默认设置</button></div>
            <div class="meter"></div>
        </aside>
    </main>

    <footer class="status">
        <span class="st-xy">X = 4951 Y = 85256</span>
        <span class="st-h">层高：1.8</span>
        <span class="st-e">标高：-1.8~0</span>
        <span class="st-p">2(24)</span>
        <span class="st-hide">隐藏：16</span>
        <span class="sbtn sb-a"><svg class="ic"><use href="#s-ortho" /></svg></span>
        <span class="sbtn sb-b"><svg class="ic"><use href="#s-snap" /></svg><span class="caret"></span></span>
        <span class="sbtn sb-c sb-gray"><svg class="ic"><use href="#s-cross" /></svg></span>
        <span class="sbtn sb-d"><svg class="ic"><use href="#s-angle" /></svg><span class="caret"></span></span>
        <span class="sbtn sb-e sb-gray"><svg class="ic"><use href="#s-plus" /></svg><span class="caret"></span></span>
        <span class="sbtn sb-f sb-gray">跨图层选择</span>
        <span class="sbtn sb-g sb-gray">折线选择</span>
        <span class="st-hint">按鼠标左键选择两个或多个平行的柱上板带，按右键确定或 ESC 取消</span>
        <span class="st-fps">142.857 FPS</span>
    </footer>
    <div class="taskbar"><span class="tb-light"></span><span class="tb-run"></span><span class="tb-clock">10:00</span></div>

    <script src="script.js"></script>
</body>

</html>
```

FILE: styles.css
```css
* {
    box-sizing: border-box;
}

html,
body {
    margin: 0;
    height: 1048px;
    overflow: hidden;
}

body {
    font-family: "Noto Sans", "Noto Sans CJK SC", sans-serif;
    font-size: 12px;
    color: #222;
    background: #fff;
}

.defs {
    position: absolute;
}

.ic {
    width: 16px;
    height: 16px;
    flex: none;
}

.caret {
    display: inline-block;
    width: 0;
    height: 0;
    margin-left: 7px;
    border-left: 3px solid transparent;
    border-right: 3px solid transparent;
    border-top: 4px solid #555;
}

/* top */
.topbar {
    display: flex;
    height: 41px;
}

.logo {
    width: 50px;
    padding: 8px 0 0 10px;
}

.topbar-rows {
    flex: 1;
}

.titlerow {
    display: grid;
    grid-template-columns: 692px 1fr auto;
    height: 22px;
    align-items: center;
}

.qat {
    display: flex;
    align-items: center;
    gap: 7px;
    padding-left: 5px;
}

.qat-caret {
    margin-left: -3px;
    margin-right: -2px;
    border-top-color: #888;
}

.sigma {
    width: 16px;
    font-size: 16px;
    font-weight: 700;
    text-align: center;
    color: #2f7fd0;
}

.qat-more {
    margin-left: 0;
}

.apptitle {
    color: #222;
    letter-spacing: .17px;
}

.winbtns {
    display: flex;
    align-items: center;
    gap: 26px;
    padding-right: 15px;
}

.win-min {
    width: 7px;
    height: 2px;
    margin-top: 5px;
    background: #555;
}

.win-max {
    width: 9px;
    height: 9px;
    border: 1px solid #444;
    box-shadow: 2px -2px 0 -1px #fff, 2px -2px 0 0 #444;
}

.win-close {
    width: 10px;
    height: 10px;
}

.tabrow {
    display: flex;
    justify-content: space-between;
    height: 19px;
}

.tabs {
    display: flex;
}

.tab {
    display: flex;
    align-items: center;
    padding: 0 13px;
    border-radius: 4px 4px 0 0;
}

.tab-on {
    background: #5ca6f5;
    color: #fff;
}

.tab-gray {
    color: #666;
}

.helpbar {
    display: flex;
    align-items: center;
    gap: 7px;
    padding-right: 2px;
}

.helpsearch {
    display: flex;
    align-items: center;
    justify-content: space-between;
    width: 245px;
    height: 17px;
    margin-right: 2px;
    padding: 0 7px 0 3px;
    border: 1px solid #c8c8c8;
    color: #bbb;
}

.help-q {
    width: 10px;
    font-size: 16px;
    color: #888;
}

.help-caret {
    margin-left: -6px;
    margin-right: 0;
    border-top-color: #bbb;
}

.ribbon {
    display: flex;
    height: 98px;
    border-top: 1px solid #ddd;
    border-bottom: 1px solid #8f9296;
    background: linear-gradient(#fff 45%, #e7e9e9);
}

.group {
    display: flex;
    flex-direction: column;
    margin: 2px 0;
    border-right: 1px solid #cfd1d2;
}

.group-body {
    display: flex;
    flex: 1;
    height: 70px;
}

.group-label {
    display: flex;
    align-items: center;
    justify-content: center;
    height: 22px;
}

.g-select {
    width: 146px;
}

.g-select .group-label {
    padding-right: 8px;
}

.g-cad {
    width: 194px;
}

.g-cad .group-body {
    padding-left: 9px;
}

.g-common {
    width: 276px;
}

.g-common .group-body {
    padding-left: 8px;
}

.g-modify {
    width: 236px;
}

.g-modify .group-body {
    padding-left: 10px;
}

.g-draw {
    width: 119px;
}

.g-draw .group-body {
    padding-left: 6px;
}

.g-strip {
    width: 174px;
}

.g-strip .group-body {
    padding-left: 8px;
}

.g-strip .group-label {
    padding-top: 3px;
}

.col {
    display: flex;
    flex-direction: column;
}

.c52 {
    width: 52px;
}

.c54 {
    width: 54px;
}

.c55 {
    width: 55px;
}

.c66 {
    width: 66px;
}

.c79 {
    width: 79px;
}

.c111 {
    width: 111px;
}

.rb {
    display: flex;
    align-items: center;
    gap: 3px;
    height: 23px;
    white-space: nowrap;
}

.off {
    color: #b6b6b6;
}

.rb-on {
    height: 19px;
    margin: 2px 0 0 -1px;
    padding-left: 1px;
    width: 159px;
    background: #c3def8;
    border: 1px solid #5ba1e8;
}

.bigbtn {
    display: flex;
    flex-direction: column;
    align-items: center;
    flex: none;
}

.big-select {
    width: 53px;
    padding: 4px 0 0 3px;
    gap: 5px;
}

.big-draw {
    width: 42px;
    padding-top: 4px;
    gap: 6px;
}

/* combos */
.selectbar {
    display: flex;
    gap: 3px;
    height: 27px;
    padding: 3px 0 0 2px;
    background: #c9ccd0;
    border-bottom: 1px solid #83868a;
}

.combo {
    position: relative;
    width: 99.500px;
    height: 21px;
    padding-left: 4px;
    line-height: 21px;
    background: #fff;
}

.combo::after {
    content: "";
    position: absolute;
    right: 5px;
    top: 9px;
    border-left: 3px solid transparent;
    border-right: 3px solid transparent;
    border-top: 4px solid #555;
}

/* panels */
.workspace {
    display: flex;
    height: 843px;
}

.panel {
    display: flex;
    flex-direction: column;
    background: #fff;
}

.strip {
    display: flex;
    justify-content: flex-end;
    align-items: center;
    height: 11px;
    flex: none;
    padding-right: 4px;
    background: #d4d6d9;
}

.strip-x {
    font-size: 12px;
    line-height: 11px;
    color: #777;
}

.panel-title {
    height: 22px;
    flex: none;
    padding-left: 9px;
    line-height: 21px;
    color: #8d8d8d;
    background: #f2f2f2;
    border-bottom: 1px solid #c2c4c6;
}

.navpanel {
    width: 210px;
    border-right: 1px solid #b4b6b8;
}

.navtools {
    display: flex;
    align-items: center;
    height: 31px;
    flex: none;
    padding: 0 1px 0 5px;
    background: #f0f0f0;
    border-bottom: 1px solid #c2c4c6;
}

.navbtn {
    display: flex;
    align-items: center;
    justify-content: center;
    width: 22px;
    height: 24px;
    margin-left: 4px;
    background: #fff;
    border: 1px solid #5ca6f5;
    border-radius: 4px;
}

.nb-first {
    margin-left: auto;
}

.tree {
    list-style: none;
    margin: 0;
    padding: 3px 0 0;
}

.tree li {
    display: flex;
    align-items: center;
    gap: 5px;
    height: 24px;
    padding-left: 3px;
}

.tree li.sub {
    padding-left: 44px;
    gap: 6px;
}

.tree li.sub-on {
    background: linear-gradient(90deg, transparent 41px, #c4d9f2 41px, #c4d9f2 138px, transparent 138px);
}

.midcol {
    display: flex;
    flex-direction: column;
    gap: 5px;
    width: 279px;
    padding-left: 4px;
}

.listpanel {
    height: 479px;
    border: 1px solid #aeb0b2;
    border-top: 0;
}

.proppanel {
    flex: 1;
    border: 1px solid #aeb0b2;
    border-top: 0;
    border-bottom: 0;
}

.ptabs {
    display: flex;
    height: 23px;
    flex: none;
    background: #f2f2f2;
    border-bottom: 1px solid #c2c4c6;
}

.ptab {
    display: flex;
    align-items: center;
    justify-content: center;
    width: 65px;
    color: #8d8d8d;
    background: #dcdddf;
    border-left: 1px solid #e8e8e8;
}

.ptab-on {
    color: #222;
    font-weight: 700;
    background: #f2f2f2;
}

.listtools {
    display: flex;
    align-items: center;
    height: 31px;
    flex: none;
    background: #f0f0f0;
    border-bottom: 1px solid #c2c4c6;
}

.lt {
    display: flex;
    align-items: center;
    gap: 4px;
}

.lt-new {
    margin-left: 3px;
}

.lt-new .caret {
    margin-left: 2px;
}

.lt-dup {
    margin-left: 10px;
}

.lt-del {
    margin-left: 9px;
}

.lt-copy {
    margin-left: 10px;
}

.lt-more {
    margin-left: auto;
    padding-right: 2px;
    font-size: 8px;
    color: #444;
}

.listsearch {
    display: flex;
    align-items: center;
    justify-content: space-between;
    height: 19px;
    flex: none;
    padding: 0 6px 0 2px;
    color: #aaa;
    border-bottom: 2px solid #d2d4d6;
}

.elemtree {
    padding-top: 3px;
}

.et-root,
.et-item {
    display: flex;
    align-items: center;
    height: 24px;
}

.et-root {
    padding-left: 10px;
}

.et-arrow {
    width: 0;
    height: 0;
    margin-right: 6px;
    border-bottom: 6px solid #444;
    border-left: 6px solid transparent;
}

.et-item {
    margin-left: 40px;
    padding-left: 3px;
}

.et-on {
    width: 66px;
    height: 21px;
    margin-top: 1px;
    background: #b3cdec;
}

.props {
    border-collapse: collapse;
    table-layout: fixed;
    width: 271px;
    flex: none;
}

.props th,
.props td {
    height: 21px;
    padding: 0 4px;
    overflow: hidden;
    white-space: nowrap;
    font-weight: 400;
    border: 1px solid #d8d9da;
}

.props tr > :first-child {
    width: 21px;
}

.props tr > :nth-child(2) {
    width: 101px;
}

.props tr > :nth-child(3) {
    width: 149px;
}

.phead th {
    background: #f0f0f0;
}

.pn {
    padding: 0 !important;
    text-align: center;
    font-size: 13px;
    background: #f0f0f0;
}

.blue {
    color: #2a6fdb;
}

.pgroup td {
    background: #e6e7e8;
}

.pgroup .pn {
    background: #f0f0f0;
}

.pgroup .pg-name {
    background: #f4f4f4;
}

.plus {
    display: inline-block;
    width: 12px;
    height: 12px;
    margin-right: 6px;
    line-height: 10px;
    text-align: center;
    border: 1px solid #777;
    border-radius: 2px;
}

.rebar {
    width: 9px;
    height: 10px;
    margin-right: 1px;
    vertical-align: 2px;
}

.prop-fill {
    flex: 1;
    background: linear-gradient(90deg, #f0f0f0 21px, #fff 21px);
}

.splitter {
    width: 4px;
    padding-top: 374px;
    background: #fff;
}

.grip {
    display: block;
    width: 3px;
    height: 100px;
    margin-left: 1px;
    background: #6c727a;
}

/* cad canvas */
.cad {
    position: relative;
    width: 1143px;
    flex: none;
    overflow: hidden;
    background: #000;
}

.drawing {
    display: block;
}

.viewtools {
    position: absolute;
    top: 0;
    right: 0;
    display: flex;
    flex-direction: column;
    align-items: center;
    width: 33px;
    height: 226px;
    padding-top: 10px;
    background: #9a9ea4;
    border: 1px solid #b4b7bb;
}

.vt {
    width: 24px;
    height: 24px;
    margin-bottom: 6px;
    flex: none;
}

.vt-caret {
    width: 0;
    height: 0;
    margin: -1px 0 7px;
    flex: none;
    border-left: 3px solid transparent;
    border-right: 3px solid transparent;
    border-top: 3px solid #333;
}

.vt-line {
    width: 24px;
    height: 1px;
    margin: -2px 0 5px;
    flex: none;
    background: #555;
}

.dialog {
    position: absolute;
    left: 249px;
    top: 315px;
    width: 402px;
    height: 328px;
    display: flex;
    flex-direction: column;
    border: 1px solid #c4c8cc;
    border-top: 0;
    box-shadow: 3px 3px 4px rgba(0, 0, 0, .45);
}

.dialog-head {
    display: flex;
    align-items: center;
    justify-content: space-between;
    height: 27px;
    padding: 0 10px 0 8px;
    color: #fff;
    background: #2e7fe0;
}

.dialog-body {
    flex: 1;
    display: flex;
    flex-direction: column;
    padding: 11px 11px 11px 12px;
    background: #f0f0f0;
}

.dialog-msg {
    flex: 1;
    padding: 5px 4px;
    background: #fff;
    border: 1px solid #1e78d0;
}

.dialog-foot {
    display: flex;
    justify-content: flex-end;
    padding-top: 7px;
}

.dialog-btn {
    width: 75px;
    height: 23px;
    padding: 0;
    font: inherit;
    color: #fff;
    background: #2e7fe0;
    border: 0;
    border-radius: 3px;
}

/* show panel */
.showpanel {
    position: relative;
    flex: 1;
    margin-left: 4px;
    border-left: 1px solid #c8cacc;
}

.showtabs {
    display: flex;
    gap: 3px;
    height: 31px;
    flex: none;
    padding: 4px 0 0 2px;
    background: #fff;
}

.stab {
    display: flex;
    align-items: center;
    justify-content: center;
    width: 75px;
    color: #888;
    background: #ededed;
    border-radius: 3px 3px 0 0;
}

.stab-on {
    color: #3d8ce6;
    background: #fff;
    border: 1px solid #ddd;
    border-bottom: 0;
}

.showtable {
    display: flex;
    height: 740px;
    flex: none;
    margin: 0 3px 0 2px;
    overflow: hidden;
    border: 1px solid #cfd0d1;
}

.show-rows {
    width: 258px;
    flex: none;
    overflow: hidden;
}

.srow {
    display: grid;
    grid-template-columns: 132px 63px 63px;
    height: 21px;
    border-bottom: 1px solid #d9dadb;
}

.shead {
    background: #f2f2f2;
    text-align: center;
    line-height: 20px;
}

.scell {
    display: flex;
    align-items: center;
    justify-content: center;
    border-left: 1px solid #d9dadb;
    border-right: 1px solid #d9dadb;
}

.sh-on {
    background: #66aaf5;
    color: #fff;
}

.scell-focus {
    border: 2px solid #808080;
}

.sname {
    position: relative;
    display: flex;
    align-items: center;
    padding-left: 41px;
}

.shead .sname {
    justify-content: center;
    padding-left: 0;
}

.sname-parent {
    padding-left: 13px;
    gap: 6px;
}

.sname-leaf::before {
    content: "";
    position: absolute;
    left: 22px;
    top: 10px;
    width: 14px;
    height: 1px;
    background: #ddd;
}

.sminus {
    width: 13px;
    height: 14px;
    line-height: 11px;
    text-align: center;
    border: 1px solid #888;
    border-radius: 2px;
}

.chk {
    position: relative;
    width: 14px;
    height: 14px;
    border: 1px solid #8a8a8a;
    border-radius: 2px;
    background: #fff;
}

.chk-on {
    background: #5aa2f8;
    border-color: #5aa2f8;
}

.chk-on::after {
    content: "";
    position: absolute;
    left: 3px;
    top: 2px;
    width: 7px;
    height: 4px;
    border-left: 2px solid #fff;
    border-bottom: 2px solid #fff;
    transform: rotate(-45deg);
}

.chk-mix {
    background: #8abdf9;
    border-color: #5a90d0;
    box-shadow: inset 0 0 0 1px #fff;
}

.show-track {
    flex: 1;
    padding: 512px 0 0 3px;
}

.show-thumb {
    display: block;
    width: 8px;
    height: 186px;
    background: #e0e1e2;
    border-radius: 4px;
}

.showfoot {
    display: flex;
    justify-content: flex-end;
    padding: 7px 8px 0 0;
}

.resetbtn {
    width: 89px;
    height: 25px;
    padding: 0;
    font: inherit;
    color: #222;
    background: #fff;
    border: 1px solid #d4d5d6;
    border-radius: 3px;
}

.meter {
    position: absolute;
    right: 0;
    top: 696px;
    width: 10px;
    height: 58px;
    background: repeating-linear-gradient(#3c4a58 0 2px, #2c3a48 2px 4px);
    border-radius: 3px 0 0 3px;
}

/* status */
.status {
    display: flex;
    align-items: center;
    height: 30px;
    background: #dcdde0;
}

.st-xy {
    width: 265px;
    padding-left: 2px;
    word-spacing: 2px;
}

.st-h {
    width: 83px;
}

.st-e {
    width: 133px;
}

.st-p {
    width: 103px;
}

.st-hide {
    width: 103px;
}

.sbtn {
    display: flex;
    align-items: center;
    justify-content: center;
    height: 24px;
    margin-right: 3px;
    background: #fff;
    border: 1px solid #3d8ce6;
}

.sbtn .caret {
    margin-left: 8px;
}

.sb-gray {
    background: #cfd0d2;
    border-color: #a6a8aa;
}

.sb-a {
    width: 25px;
}

.sb-b {
    width: 35px;
    margin-right: 7px;
}

.sb-c {
    width: 24px;
    margin-right: 7px;
}

.sb-d {
    width: 35px;
    margin-right: 5px;
}

.sb-e {
    width: 34px;
    margin-right: 4px;
}

.sb-f {
    width: 73px;
}

.sb-g {
    width: 60px;
    margin-right: 7px;
}

.st-hint {
    flex: 1;
}

.st-fps {
    padding-right: 13px;
}

.taskbar {
    display: flex;
    height: 9px;
    overflow: hidden;
    background: #16365a;
}

.tb-light {
    width: 343px;
    margin-left: 48px;
    background: #eef1f5;
}

.tb-run {
    width: 49px;
    margin-left: 217px;
    background: #0f5f9f;
}

.tb-clock {
    margin-left: 1158px;
    color: #fff;
    line-height: 24px;
}
```

FILE: script.js
```js
// tabel i højre panel
const showRows = [
    ["基坑灰土回填", 0, 0], ["房心回填", 0, 0], ["基础", 2, 1],
    ["基础梁", 0, 0], ["筏板基础", 1, 0], ["筏板主筋", 0, 0], ["筏板负筋", 0, 0],
    ["基础板带", 1, 0, "focus"], ["集水坑", 0, 0], ["柱墩", 0, 0], ["独立基础", 0, 0],
    ["条形基础", 0, 0], ["桩承台", 0, 0], ["桩", 1, 0], ["垫层", 0, 0], ["地沟", 0, 0],
    ["砖胎膜", 0, 0], ["其它", 2, 1], ["建筑面积", 0, 0], ["平整场地", 0, 0], ["散水", 0, 0],
    ["台阶", 0, 0], ["后浇带", 1, 0], ["挑檐", 0, 0], ["雨蓬", 0, 0], ["阳台", 0, 0],
    ["屋面", 0, 0], ["保温层", 0, 0], ["栏板", 0, 0], ["压顶", 0, 0], ["栏杆扶手", 0, 0],
    ["脚手架", 0, 0], ["自定义", 2, 1], ["自定义点", 0, 0], ["", 0, 0]
];

const chkClass = ["chk", "chk chk-on", "chk chk-mix"];

document.querySelector("#showRows").innerHTML = showRows.map(r => {
    const parent = r[2] == 1;
    const name = parent
        ? `<div class="sname sname-parent"><span class="sminus">-</span>${r[0]}</div>`
        : `<div class="sname sname-leaf">${r[0]}</div>`;
    const focus = r[3] ? " scell-focus" : "";
    return `<div class="srow">${name}<div class="scell${focus}"><span class="${chkClass[r[1]]}"></span></div><div class="scell"><span class="chk"></span></div></div>`;
}).join("");

// tegning
const parts = [];
const X0 = 578;
const X1 = 1636;
const YTOP = 300;
const YEND = 1010;

const vStrips = [[578, 630], [664, 719], [773, 829], [872, 927], [981, 1036], [1090, 1145], [1200, 1254], [1309, 1363], [1418, 1473], [1527, 1582]];
const hStrips = [[555, 610], [701, 756], [801, 856], [901, 956]];

function rect(x, y, w, h, fill, stroke) {
    parts.push(`<rect x="${x}" y="${y}" width="${w}" height="${h}" fill="${fill}" stroke="${stroke || "none"}"/>`);
}

function line(x1, y1, x2, y2, color, w) {
    parts.push(`<line x1="${x1}" y1="${y1}" x2="${x2}" y2="${y2}" stroke="${color}" stroke-width="${w || 1}"/>`);
}

function poly(d, color, w) {
    parts.push(`<path d="${d}" fill="none" stroke="${color}" stroke-width="${w || 1}"/>`);
}

function txt(x, y, s, size, color, extra) {
    parts.push(`<text x="${x}" y="${y}" font-size="${size}" fill="${color}" text-anchor="middle" font-family="Noto Sans, sans-serif" ${extra || ""}>${s}</text>`);
}

function bubble(x, y, s) {
    let pts = "";
    for (let i = 0; i < 12; i++) {
        const a = (i + .5) * Math.PI / 6;
        pts += `${(x + 12 * Math.cos(a)).toFixed(1)},${(y + 12 * Math.sin(a)).toFixed(1)} `;
    }
    parts.push(`<polygon points="${pts}" fill="none" stroke="#008a00"/>`);
    txt(x, y + 6, s, 18, "#fff");
}

function pile(x, y) {
    parts.push(`<circle cx="${x}" cy="${y}" r="8" fill="url(#hatch)"/>`);
}

function cyan(x, y) {
    parts.push(`<circle cx="${x}" cy="${y}" r="7.500" fill="rgba(55,135,150,.82)" stroke="#22e4e4" stroke-width="1.500"/>`);
    line(x - 6, y, x - 1, y, "#7fb8b8");
}

function box(x, y, w, h, color) {
    rect(x, y, w, h, "none", color || "rgba(235,235,225,.75)");
}

function redTick(x1, x2, y) {
    line(x1, y, x2, y, "#f01010", 1.500);
}

// revisionssky: punkterne går med uret
function scallops(points) {
    let d = `M${points[0][0]} ${points[0][1]}`;
    for (let i = 1; i < points.length; i++) {
        const r = Math.hypot(points[i][0] - points[i - 1][0], points[i][1] - points[i - 1][1]) * .62;
        d += ` A${r.toFixed(1)} ${r.toFixed(1)} 0 0 1 ${points[i][0]} ${points[i][1]}`;
    }
    poly(d, "rgba(235,235,235,.85)");
}

parts.push(`<defs><pattern id="hatch" width="2.500" height="2.500" patternUnits="userSpaceOnUse" patternTransform="rotate(45)"><rect width="2.500" height="2.500" fill="#f70cdc"/><rect width=".6" height="2.500" fill="#ff50e4"/></pattern></defs>`);

// baggrund
rect(X0, YTOP, X1 - X0, YEND - YTOP, "#666666");
vStrips.forEach(s => rect(s[0], YTOP, s[1] - s[0], YEND - YTOP, "#8a8538"));
hStrips.forEach(h => {
    rect(X0, h[0], X1 - X0, h[1] - h[0], "#8a8538");
    vStrips.forEach(s => rect(s[0], h[0], s[1] - s[0], h[1] - h[0], "#96951a"));
});
rect(X0, YTOP, X1 - X0, 50, "rgba(26,106,250,.5)");
rect(X0, 410, X1 - X0, 54, "rgba(26,106,250,.5)");

// blå konstruktion
const dark = "#4a4a86";
const blue = "#1818f0";
poly("M592 778V749H1042", dark);
poly("M592 778H613V855H1042V826", dark);
poly("M624 778H1042M624 778V843H1042", dark);
poly("M633 790V837H1067", "rgba(230,230,80,.7)");
[659, 719, 748, 777, 836, 865, 894, 923, 952, 1010, 1040].forEach(x => {
    poly(`M${x - 3} 843V826H${x + 3}V843`, dark);
});
[689, 806, 981].forEach(x => {
    poly(`M${x - 3} 843V826H${x + 3}V843`, blue, 1.500);
});
[636, 665, 694, 723].forEach(x => {
    rect(x, 778, 20, 30, "none", dark);
    poly(`M${x + 1} 806Q${x + 2} 792 ${x + 20} 792`, blue);
});
poly("M629 778H665M723 778H745", blue, 1.500);
poly("M729 662V562H740V662", blue, 1.200);
poly("M680 662H742M680 662V677H742", dark, 1.200);
poly("M684 677H742", blue, 1.200);
poly("M1090 500H1390V530H1090Z", "rgba(230,230,80,.55)");
poly("M1145 497L1388 510V534H1145", blue, 1.500);
poly("M1114 628H1390V661H1114Z", "rgba(90,90,140,.9)");
poly("M1144 660H1310M1144 628H1300", blue, 1.500);
[1168, 1177, 1205, 1211, 1241, 1246, 1278, 1287, 1315, 1323].forEach(x => line(x, 665, x, 696, x % 2 ? dark : blue));
poly("M1533 645H1636M1533 645V677H1636", "rgba(230,230,80,.6)");
poly("M1535 675L1549 648L1600 651H1636M1550 677H1636", blue);
poly("M1551 341H1610V467H1551ZM1551 341L1610 467M1610 341L1551 467", "#2238e8");
poly("M715 1010V983H803V1010", "#555");
poly("M715 983H750", blue);
poly("M883 1010V983H970V1010", "#555");
poly("M925 983H970V1010", blue);
poly("M1050 1010V983H1138V1010", "#555");
poly("M1050 1010V983H1090", blue);
poly("M592 480H1389V512", "rgba(90,90,140,.6)");

// lyse bånd-kanter
const edge = "#78a8f0";
poly("M702 349V301H930L1636 303", edge, 1.500);
poly("M702 349H1636", edge, 2);
poly("M578 433H702V411H1636", edge, 1.500);
poly("M578 464H1636", edge, 2);

// gule linjer
vStrips.forEach(s => {
    line(s[0], YTOP, s[0], YEND, "#ffff00", 2);
    line(s[1], YTOP, s[1], YEND, "#ffff00", 2);
});
[555, 610, 701, 756, 801, 856, 901, 956].forEach(y => line(X0, y, X1, y, "#ffff00", 2));
poly("M578 299H630M664 299H719M773 299H829M872 299H900", "#ffff00", 2);

// akser
[572, 899, 1227].forEach(x => {
    line(x, 236, x, YEND, "rgba(200,200,200,.8)", x == 572 ? 1.500 : 1);
    line(x, 190, x, 236, "#00c000", 1.500);
    line(x - 5, 242, x + 5, 232, "#009000");
    line(x, 986, x, YEND, "#00a000");
});
line(517, 291, 517, YEND, "#006000", 1.500);
line(572, 182, X1, 182, "#006000", 1.500);
line(572, 236, X1, 236, "#006000", 1.500);
[291, 728, 928].forEach(y => line(513, y, X1, y, "rgba(190,190,190,.8)"));

// røde mærker
[[574, 597], [743, 774], [919, 950], [1095, 1126], [1272, 1302], [1448, 1478]].forEach(p => redTick(p[0], p[1], 291));
[[575, 585], [1271, 1302], [1447, 1478]].forEach(p => redTick(p[0], p[1], 728));
[[575, 585], [743, 774], [921, 950], [1095, 1126], [1271, 1302], [1447, 1478]].forEach(p => redTick(p[0], p[1], 928));
[572, 899, 1227].forEach(x => line(x, 407, x, 438, "#e01020", 1.500));
line(572, 583, 572, 614, "#b01020", 1.500);
line(572, 760, 572, 790, "#b01020", 1.500);
[899, 1227].forEach(x => line(x, 942, x, 967, "#e01020", 1.500));
line(1227, 760, 1227, 790, "#e01020", 1.500);

// kolonner
[575, 883, 1210].forEach(x => {
    box(x, 267, 33, 89);
    line(x, 294, x + 33, 294, "rgba(235,235,225,.6)");
    line(x, 327, x + 33, 327, "rgba(235,235,225,.6)");
});
rect(584, 304, 19, 23, "rgba(255,255,255,.28)");
rect(890, 304, 19, 23, "rgba(255,255,255,.28)");
rect(1217, 304, 19, 23, "rgba(255,255,255,.28)");
box(1429, 294, 34, 34);
box(575, 493, 33, 33);
[728, 928].forEach(y => {
    box(552, y - 19, 26, 38, "#fff");
    box(578, y - 19, 62, 38);
    line(617, y - 19, 617, y + 19, "rgba(235,235,225,.6)");
    rect(584, y - 12, 25, 25, "rgba(255,255,255,.3)");
});
box(1208, 684, 38, 88);
line(1208, 749, 1246, 749, "rgba(235,235,225,.6)");
rect(1215, 716, 24, 25, "rgba(255,255,255,.3)");
[855, 1183].forEach((x, i) => {
    box(x, 885, 88, 87);
    box(x + (i ? 23 : 24), 907, 42, 42);
    rect(x + 32, 916, 25, 25, "rgba(255,255,255,.32)");
});
box(1620, 695, 20, 60);
box(1620, 885, 20, 87);

// cirkler
[[322, [692, 801, 1008, 1118, 1336, 1555]], [437, [603, 692, 801, 899, 1008, 1118, 1227, 1336, 1445, 1555]],
[583, [603, 692, 801, 1336, 1445, 1555]], [728, [692, 1336, 1445, 1555]],
[828, [603, 692, 801, 1008, 1118, 1336, 1445, 1555]], [928, [692, 801, 1008, 1118, 1336, 1445, 1555]]].forEach(r => {
    r[1].forEach(x => cyan(x, r[0]));
});
[[592, 282], [592, 340], [899, 282], [899, 340], [1227, 282], [1227, 340], [1445, 311], [591, 510],
[567, 728], [625, 728], [567, 928], [625, 928], [870, 899], [928, 899], [870, 957], [928, 957],
[1227, 699], [1227, 757], [1198, 899], [1256, 899], [1198, 957], [1256, 957], [1632, 708], [1632, 899], [1632, 957]].forEach(p => pile(p[0], p[1]));

// skyer
scallops([[745, 791], [730, 791], [703, 791], [675, 791], [648, 791], [621, 791], [593, 791], [567, 791], [538, 791], [506, 772], [506, 740], [506, 713], [506, 685], [506, 658], [533, 630], [561, 630], [588, 630], [616, 630], [643, 630], [670, 630], [697, 630], [725, 630], [745, 630]]);
scallops([[1144, 630], [1170, 630], [1198, 630], [1225, 630], [1253, 630], [1289, 652], [1289, 695], [1289, 720], [1289, 748], [1272, 786], [1248, 791], [1221, 791], [1193, 791], [1165, 791], [1144, 791]]);
scallops([[1636, 226], [1600, 230], [1581, 268], [1585, 300], [1602, 310], [1590, 345], [1602, 378], [1590, 410], [1602, 440], [1590, 475], [1602, 505], [1592, 530], [1600, 560], [1636, 585]]);
line(494, 685, 545, 685, "#999", 1.500);

// bobler og mål
bubble(572, 178, "1");
bubble(899, 178, "2");
bubble(1227, 178, "3");
bubble(506, 291, "J");
bubble(506, 728, "H");
bubble(506, 928, "G");
bubble(1624, 728, "H");
bubble(1624, 928, "G");
bubble(572, 997, "1");
bubble(899, 997, "2");
bubble(1227, 997, "3");
txt(735, 216, "9000", 18, "#fff");
txt(1063, 216, "9000", 18, "#fff");
txt(1445, 216, "12000", 18, "#fff");
txt(497, 510, "12000", 17, "#fff", 'transform="rotate(-90 497 510)"');
txt(497, 829, "9000", 17, "#fff", 'transform="rotate(-90 497 829)"');

// koordinatkryds
poly("M544 960V940", "#00ff00", 5);
parts.push(`<path d="M537 942l7-12 7 12z" fill="#00e000"/><path d="M562 953l12 7-12 7z" fill="#ff1010"/>`);
line(544, 960, 564, 960, "#ff1010", 5);
parts.push(`<circle cx="544" cy="960" r="6" fill="#0808c8"/>`);
txt(544, 928, "Y", 14, "#00e000");
txt(580, 965, "X", 14, "#e01010");

document.querySelector("#drawing").innerHTML = parts.join("");
```
